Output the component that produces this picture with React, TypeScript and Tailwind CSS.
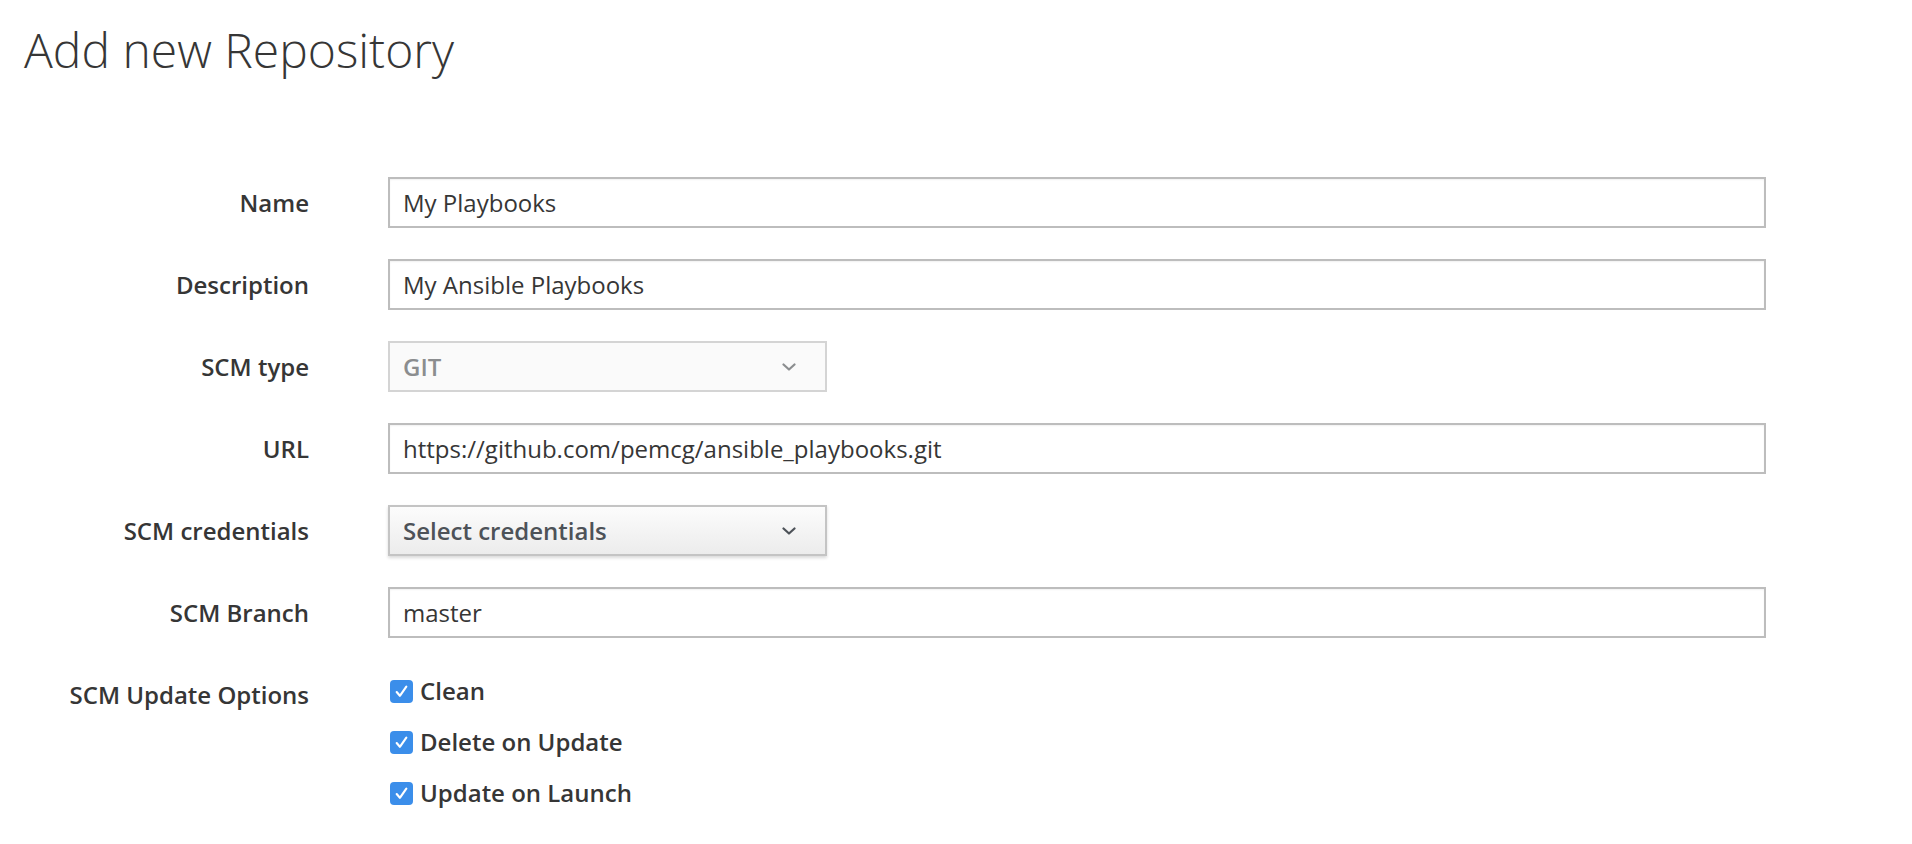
import React from 'react';

const Chevron: React.FC<{ color: string }> = ({ color }) => (
  <svg width="14" height="8" viewBox="0 0 14 8" fill="none">
    <path d="M1.5 1.5L7 6.5L12.5 1.5" stroke={color} strokeWidth="2.2" strokeLinecap="round" strokeLinejoin="round" />
  </svg>
);

const CheckBox: React.FC = () => (
  <span className="w-[23px] h-[23px] rounded-[4px] bg-[#3b8eea] flex items-center justify-center shrink-0">
    <svg width="15" height="15" viewBox="0 0 14 14" fill="none">
      <path d="M2.5 7.5L5.5 11L11.5 2.5" stroke="white" strokeWidth="2" strokeLinecap="round" strokeLinejoin="round" />
    </svg>
  </span>
);

const Label: React.FC<{ children: React.ReactNode }> = ({ children }) => (
  <div className="h-[51px] flex items-center justify-end text-[24px] font-semibold text-[#363636]">{children}</div>
);

const TextInput: React.FC<{ value: string }> = ({ value }) => (
  <div className="h-[51px] border-2 border-[#bdbdbd] bg-white flex items-center px-[13px] text-[24px] text-[#363636] shadow-[inset_0_1px_2px_rgba(0,0,0,0.06)]">
    {value}
  </div>
);

const App: React.FC = () => {
  const options = ['Clean', 'Delete on Update', 'Update on Launch'];

  return (
    <div className="min-h-screen bg-white font-['Open_Sans',sans-serif] text-[#363636]">
      <h1 className="pl-[24px] pt-[23px] text-[48px] leading-[54px] font-light">Add new Repository</h1>

      <div className="mt-[100px] grid grid-cols-[309px_1378px] gap-x-[79px] gap-y-[31px]">
        <Label>Name</Label>
        <TextInput value="My Playbooks" />

        <Label>Description</Label>
        <TextInput value="My Ansible Playbooks" />

        <Label>SCM type</Label>
        <div className="h-[51px] w-[439px] border-2 border-[#d4d4d4] bg-[#fafafa] flex items-center justify-between pl-[13px] pr-[29px] text-[24px] font-semibold text-[#8b8d8f]">
          <span>GIT</span>
          <Chevron color="#8b8d8f" />
        </div>

        <Label>URL</Label>
        <TextInput value="https://github.com/pemcg/ansible_playbooks.git" />

        <Label>SCM credentials</Label>
        <div className="h-[51px] w-[439px] border-2 border-[#c4c4c4] bg-gradient-to-b from-[#fcfcfc] to-[#ececec] shadow-[0_2px_3px_rgba(0,0,0,0.15)] flex items-center justify-between pl-[13px] pr-[29px] text-[24px] font-semibold text-[#4d5258]">
          <span>Select credentials</span>
          <Chevron color="#4d5258" />
        </div>

        <Label>SCM Branch</Label>
        <TextInput value="master" />

        <div className="pt-[11px] text-right text-[24px] font-semibold leading-[30px]">SCM Update Options</div>
        <div className="pt-[7px] flex flex-col gap-[21px]">
          {options.map((opt) => (
            <label key={opt} className="h-[30px] flex items-center gap-[7px] pl-[2px] text-[24px] font-semibold">
              <CheckBox />
              <span>{opt}</span>
            </label>
          ))}
        </div>
      </div>
    </div>
  );
};

export default App;
